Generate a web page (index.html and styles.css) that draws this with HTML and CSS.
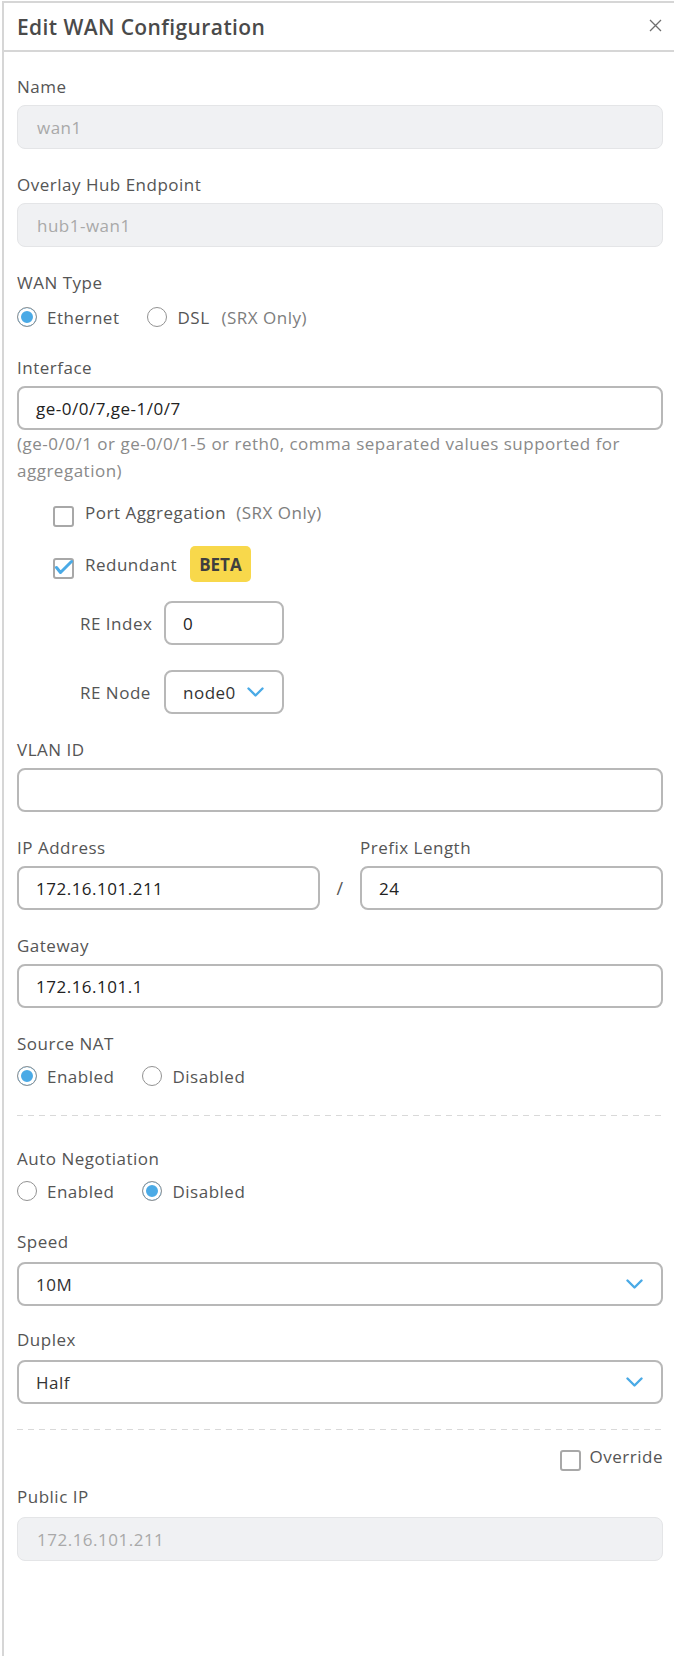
FILE: index.html
```html
<!DOCTYPE html>
<html>
<head>
<meta charset="utf-8">
<link rel="stylesheet" href="styles.css">
</head>
<body>
<div class="panel">
  <div class="header">
    <h1 class="title">Edit WAN Configuration</h1>
    <svg class="close" width="13" height="13" viewBox="0 0 13 13"><path d="M1 1 L12 12 M12 1 L1 12" stroke="#6f6f6f" stroke-width="1.3" fill="none"/></svg>
  </div>
  <div class="body">
    <div class="field">
      <div class="label">Name</div>
      <div class="input disabled">wan1</div>
    </div>
    <div class="field">
      <div class="label">Overlay Hub Endpoint</div>
      <div class="input disabled">hub1-wan1</div>
    </div>
    <div class="field field-radio">
      <div class="label">WAN Type</div>
      <div class="radios">
        <span class="opt"><span class="radio on"></span>Ethernet</span>
        <span class="opt"><span class="radio"></span>DSL<span class="note">(SRX Only)</span></span>
      </div>
    </div>
    <div class="field-iface">
      <div class="label">Interface</div>
      <div class="input">ge-0/0/7,ge-1/0/7</div>
      <div class="help">(ge-0/0/1 or ge-0/0/1-5 or reth0, comma separated values supported for aggregation)</div>
    </div>
    <div class="options">
      <div class="check-row row-port"><span class="checkbox"></span><span>Port Aggregation</span><span class="note">(SRX Only)</span></div>
      <div class="check-row row-red"><span class="checkbox checked"><svg width="20" height="20" viewBox="0 0 20 20"><path d="M3.5 9.5 L7.5 14.5 L18.5 3.5" stroke="#4aaae6" stroke-width="3" fill="none" stroke-linecap="round" stroke-linejoin="round"/></svg></span><span>Redundant</span><span class="badge">BETA</span></div>
      <div class="sub-row row-idx"><span class="sub-label">RE Index</span><div class="input small">0</div></div>
      <div class="sub-row row-node"><span class="sub-label">RE Node</span><div class="input small select">node0<svg class="chev" width="17" height="10" viewBox="0 0 17 10"><path d="M1.5 1.5 L8.5 8.5 L15.5 1.5" stroke="#4aaae6" stroke-width="2.4" fill="none" stroke-linecap="round" stroke-linejoin="round"/></svg></div></div>
    </div>
    <div class="field field-vlan">
      <div class="label">VLAN ID</div>
      <div class="input"></div>
    </div>
    <div class="field ip-grid">
      <div class="label">IP Address</div>
      <div></div>
      <div class="label">Prefix Length</div>
      <div class="input">172.16.101.211</div>
      <div class="slash">/</div>
      <div class="input">24</div>
    </div>
    <div class="field">
      <div class="label">Gateway</div>
      <div class="input">172.16.101.1</div>
    </div>
    <div class="field-radio2">
      <div class="label">Source NAT</div>
      <div class="radios radios-tight">
        <span class="opt"><span class="radio on"></span>Enabled</span>
        <span class="opt"><span class="radio"></span>Disabled</span>
      </div>
    </div>
    <div class="divider div1"></div>
    <div class="field-auto">
      <div class="label">Auto Negotiation</div>
      <div class="radios radios-tight">
        <span class="opt"><span class="radio"></span>Enabled</span>
        <span class="opt"><span class="radio on"></span>Disabled</span>
      </div>
    </div>
    <div class="field-sel sel-speed">
      <div class="label">Speed</div>
      <div class="input select">10M<svg class="chev" width="17" height="10" viewBox="0 0 17 10"><path d="M1.5 1.5 L8.5 8.5 L15.5 1.5" stroke="#4aaae6" stroke-width="2.4" fill="none" stroke-linecap="round" stroke-linejoin="round"/></svg></div>
    </div>
    <div class="field-sel sel-duplex">
      <div class="label">Duplex</div>
      <div class="input select">Half<svg class="chev" width="17" height="10" viewBox="0 0 17 10"><path d="M1.5 1.5 L8.5 8.5 L15.5 1.5" stroke="#4aaae6" stroke-width="2.4" fill="none" stroke-linecap="round" stroke-linejoin="round"/></svg></div>
    </div>
    <div class="divider div2"></div>
    <div class="override"><span class="checkbox"></span><span>Override</span></div>
    <div class="field-sel field-public">
      <div class="label">Public IP</div>
      <div class="input disabled">172.16.101.211</div>
    </div>
  </div>
</div>
</body>
</html>
```
FILE: styles.css
```css
* { box-sizing: border-box; }
html, body { margin: 0; padding: 0; background: #fff; }
body {
  font-family: "Open Sans", "Noto Sans", sans-serif;
  font-size: 17px;
  letter-spacing: 0.5px;
  color: #555;
}
.panel {
  margin: 1px 0 0 2px;
  border-top: 2px solid #d6d6d6;
  border-left: 2px solid #d6d6d6;
  height: 1655px;
}
.header {
  display: flex;
  justify-content: space-between;
  align-items: flex-start;
  padding: 10px 12px 9px 13px;
  border-bottom: 2px solid #d6d6d6;
}
.title {
  margin: 0;
  font-size: 21px;
  line-height: 28px;
  font-weight: 600;
  letter-spacing: 0.4px;
  color: #4a4a4a;
}
.close { margin-top: 6px; }
.body { padding: 23px 11px 0 13px; }
.label { line-height: 23px; margin-bottom: 7px; }
.field { margin-bottom: 24px; }
.input {
  height: 44px;
  border: 2px solid #b8b8b8;
  border-radius: 8px;
  padding: 0 17px;
  display: flex;
  align-items: center;
  color: #222;
  background: #fff;
}
.input.disabled {
  background: #f0f1f3;
  border: 1px solid #e4e5e7;
  padding-left: 19px;
  color: #a9a9a9;
}
.field-radio { margin-bottom: 27px; }
.radios { display: flex; align-items: center; height: 24px; margin-top: 11px; }
.radios-tight { margin-top: 9px; }
.opt { display: flex; align-items: center; margin-right: 28px; }
.radio {
  width: 20px; height: 20px;
  border: 1px solid #929292;
  border-radius: 50%;
  margin-right: 10px;
  background: #fff;
  flex: none;
}
.radio.on { background: #4aaae6; box-shadow: inset 0 0 0 3px #fff; }
.note { color: #7d7d7d; margin-left: 12px; }
.help { color: #8a8a8a; line-height: 27px; }
.options { margin-left: 36px; }
.check-row { display: flex; align-items: center; }
.row-port { height: 28px; margin-top: 14px; }
.row-port .note { margin-left: 10px; }
.row-red { height: 36px; margin-top: 20px; }
.checkbox {
  width: 21px; height: 21px;
  margin-top: 8px;
  margin-right: 11px;
  border: 2px solid #a8a8a8;
  border-radius: 3px;
  flex: none;
  position: relative;
  background: #fff;
}
.checkbox svg { position: absolute; left: -2px; top: -2px; }
.badge {
  margin-left: 13px;
  background: #f8d84b;
  border-radius: 5px;
  height: 36px;
  padding: 0 9px;
  display: flex;
  align-items: center;
  font-weight: 700;
  letter-spacing: 0;
  color: #3f3f3f;
}
.sub-row { display: flex; align-items: center; margin-left: 27px; }
.row-idx { margin-top: 19px; }
.row-node { margin-top: 25px; }
.sub-label { width: 84px; flex: none; }
.input.small { width: 120px; }
.select { justify-content: space-between; padding-right: 18px; color: #333; }
.field-vlan { margin-top: 24px; }
.ip-grid {
  display: grid;
  grid-template-columns: 1fr 40px 1fr;
}
.slash { display: flex; align-items: center; justify-content: center; color: #555; font-size: 18px; }
.divider {
  height: 1px;
  background-image: linear-gradient(to right, #d9d9d9 0, #d9d9d9 6px, transparent 6px);
  background-size: 11px 1px;
  background-repeat: repeat-x;
}
.div1 { margin-top: 27px; margin-bottom: 31px; }
.field-auto { margin-bottom: 27px; }
.field-sel .label { margin-bottom: 9px; }
.sel-speed { margin-bottom: 22px; }
.div2 { margin-top: 25px; }
.override {
  display: flex;
  justify-content: flex-end;
  align-items: center;
  height: 28px;
  margin-top: 12px;
}
.override .checkbox { margin-right: 9px; }
.field-public { margin-top: 15px; }
```
